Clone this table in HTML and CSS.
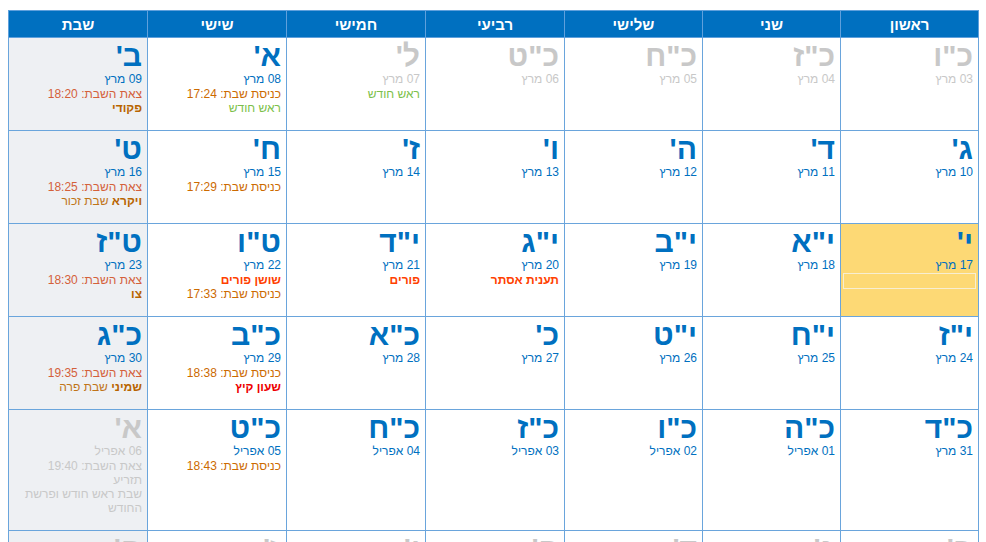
FILE: index.html
```html
<!DOCTYPE html>
<html lang="he" dir="rtl">
<head>
<meta charset="utf-8">
<title>לוח שנה</title>
<link rel="stylesheet" href="styles.css">
</head>
<body>
<table class="cal">
  <colgroup>
    <col class="col-narrow"><col class="col-narrow"><col class="col-narrow">
    <col class="col-wide"><col class="col-wide"><col class="col-wide"><col class="col-wide">
  </colgroup>
  <thead>
    <tr>
      <th>ראשון</th><th>שני</th><th>שלישי</th><th>רביעי</th><th>חמישי</th><th>שישי</th><th>שבת</th>
    </tr>
  </thead>
  <tbody>
    <tr>
      <td class="other"><div class="cell"><div class="day">כ"ו</div><div class="date">03 מרץ</div></div></td>
      <td class="other"><div class="cell"><div class="day">כ"ז</div><div class="date">04 מרץ</div></div></td>
      <td class="other"><div class="cell"><div class="day">כ"ח</div><div class="date">05 מרץ</div></div></td>
      <td class="other"><div class="cell"><div class="day">כ"ט</div><div class="date">06 מרץ</div></div></td>
      <td class="other"><div class="cell"><div class="day">ל'</div><div class="date">07 מרץ</div><div class="line rosh">ראש חודש</div></div></td>
      <td><div class="cell"><div class="day">א'</div><div class="date">08 מרץ</div><div class="line enter">כניסת שבת: 17:24</div><div class="line rosh">ראש חודש</div></div></td>
      <td class="sat"><div class="cell"><div class="day">ב'</div><div class="date">09 מרץ</div><div class="line exit">צאת השבת: 18:20</div><div class="line parasha"><b>פקודי</b></div></div></td>
    </tr>
    <tr>
      <td><div class="cell"><div class="day">ג'</div><div class="date">10 מרץ</div></div></td>
      <td><div class="cell"><div class="day">ד'</div><div class="date">11 מרץ</div></div></td>
      <td><div class="cell"><div class="day">ה'</div><div class="date">12 מרץ</div></div></td>
      <td><div class="cell"><div class="day">ו'</div><div class="date">13 מרץ</div></div></td>
      <td><div class="cell"><div class="day">ז'</div><div class="date">14 מרץ</div></div></td>
      <td><div class="cell"><div class="day">ח'</div><div class="date">15 מרץ</div><div class="line enter">כניסת שבת: 17:29</div></div></td>
      <td class="sat"><div class="cell"><div class="day">ט'</div><div class="date">16 מרץ</div><div class="line exit">צאת השבת: 18:25</div><div class="line parasha"><b>ויקרא</b> שבת זכור</div></div></td>
    </tr>
    <tr>
      <td class="today"><div class="cell"><div class="day">י'</div><div class="date">17 מרץ</div><div class="note-box"></div></div></td>
      <td><div class="cell"><div class="day">י"א</div><div class="date">18 מרץ</div></div></td>
      <td><div class="cell"><div class="day">י"ב</div><div class="date">19 מרץ</div></div></td>
      <td><div class="cell"><div class="day">י"ג</div><div class="date">20 מרץ</div><div class="line holiday">תענית אסתר</div></div></td>
      <td><div class="cell"><div class="day">י"ד</div><div class="date">21 מרץ</div><div class="line holiday">פורים</div></div></td>
      <td><div class="cell"><div class="day">ט"ו</div><div class="date">22 מרץ</div><div class="line holiday">שושן פורים</div><div class="line enter">כניסת שבת: 17:33</div></div></td>
      <td class="sat"><div class="cell"><div class="day">ט"ז</div><div class="date">23 מרץ</div><div class="line exit">צאת השבת: 18:30</div><div class="line parasha"><b>צו</b></div></div></td>
    </tr>
    <tr>
      <td><div class="cell"><div class="day">י"ז</div><div class="date">24 מרץ</div></div></td>
      <td><div class="cell"><div class="day">י"ח</div><div class="date">25 מרץ</div></div></td>
      <td><div class="cell"><div class="day">י"ט</div><div class="date">26 מרץ</div></div></td>
      <td><div class="cell"><div class="day">כ'</div><div class="date">27 מרץ</div></div></td>
      <td><div class="cell"><div class="day">כ"א</div><div class="date">28 מרץ</div></div></td>
      <td><div class="cell"><div class="day">כ"ב</div><div class="date">29 מרץ</div><div class="line enter">כניסת שבת: 18:38</div><div class="line dst">שעון קיץ</div></div></td>
      <td class="sat"><div class="cell"><div class="day">כ"ג</div><div class="date">30 מרץ</div><div class="line exit">צאת השבת: 19:35</div><div class="line parasha"><b>שמיני</b> שבת פרה</div></div></td>
    </tr>
    <tr>
      <td><div class="cell"><div class="day">כ"ד</div><div class="date">31 מרץ</div></div></td>
      <td><div class="cell"><div class="day">כ"ה</div><div class="date">01 אפריל</div></div></td>
      <td><div class="cell"><div class="day">כ"ו</div><div class="date">02 אפריל</div></div></td>
      <td><div class="cell"><div class="day">כ"ז</div><div class="date">03 אפריל</div></div></td>
      <td><div class="cell"><div class="day">כ"ח</div><div class="date">04 אפריל</div></div></td>
      <td><div class="cell"><div class="day">כ"ט</div><div class="date">05 אפריל</div><div class="line enter">כניסת שבת: 18:43</div></div></td>
      <td class="sat other"><div class="cell"><div class="day">א'</div><div class="date">06 אפריל</div><div class="line">צאת השבת: 19:40</div><div class="line">תזריע</div><div class="line">שבת ראש חודש ופרשת החודש</div></div></td>
    </tr>
    <tr>
      <td class="other"><div class="cell"><div class="day">ב'</div><div class="date">07 אפריל</div></div></td>
      <td class="other"><div class="cell"><div class="day">ג'</div><div class="date">08 אפריל</div></div></td>
      <td class="other"><div class="cell"><div class="day">ד'</div><div class="date">09 אפריל</div></div></td>
      <td class="other"><div class="cell"><div class="day">ה'</div><div class="date">10 אפריל</div></div></td>
      <td class="other"><div class="cell"><div class="day">ו'</div><div class="date">11 אפריל</div></div></td>
      <td class="other"><div class="cell"><div class="day">ז'</div><div class="date">12 אפריל</div></div></td>
      <td class="sat other"><div class="cell"><div class="day">ח'</div><div class="date">13 אפריל</div></div></td>
    </tr>
  </tbody>
</table>
</body>
</html>
```

FILE: styles.css
```css
html, body {
  margin: 0;
  padding: 0;
  background: #ffffff;
}

body {
  padding: 10px 7px 0 8px;
  font-family: "Liberation Sans", Arial, sans-serif;
  direction: rtl;
}

.cal {
  width: 971px;
  table-layout: fixed;
  border-collapse: collapse;
}

.col-narrow {
  width: 138px;
}

.col-wide {
  width: 139px;
}

.cal th {
  height: 26px;
  padding: 0;
  background: #0070c0;
  color: #ffffff;
  font-size: 15px;
  font-weight: bold;
  text-align: center;
  border: 1px solid #5fa0dc;
}

.cal td {
  vertical-align: top;
  padding: 2px 2px 15px 2px;
  border: 1px solid #6aa5dc;
  background: #ffffff;
}

.cal td.sat {
  background: #eef0f3;
}

.cal td.today {
  background: #fdd975;
}

.cell {
  min-height: 75px;
  text-align: right;
}

.day {
  font-size: 30px;
  font-weight: bold;
  line-height: 32px;
  color: #0070c0;
  padding-right: 3px;
}

.date {
  font-size: 12px;
  line-height: 15px;
  color: #0070c0;
  padding-right: 3px;
}

.line {
  font-size: 12px;
  line-height: 14px;
  padding-right: 3px;
}

.enter {
  color: #cc6a00;
}

.exit {
  color: #d4603a;
}

.parasha {
  color: #c07418;
}

.parasha b {
  color: #b86400;
}

.rosh {
  color: #7cbf4a;
}

.holiday {
  color: #ff4000;
  font-weight: bold;
}

.dst {
  color: #ee0000;
  font-weight: bold;
}

.note-box {
  height: 14px;
  margin-top: 0;
  border: 1px solid #f7eed2;
}

.other .day,
.other .date,
.other .line {
  color: #c8c8c8;
}

.other .line.rosh {
  color: #7cbf4a;
}
```
